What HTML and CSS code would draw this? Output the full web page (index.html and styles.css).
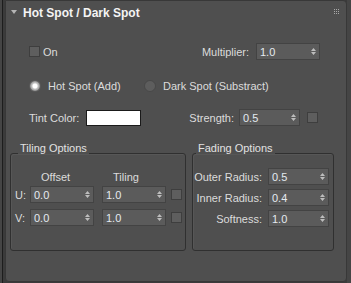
FILE: index.html
```html
<!DOCTYPE html>
<html lang="en">
<head>
  <meta charset="UTF-8" />
  <title>Hot Spot / Dark Spot</title>
  <link rel="stylesheet" href="styles.css">
</head>
<body>
  <div class="side">
    <div class="rollout">

      <!-- Rollout header -->
      <div class="roll-head">
        <span class="tri"></span>
        <span class="roll-title">Hot Spot / Dark Spot</span>
        <svg class="grip" width="5" height="5" viewBox="0 0 5 5">
          <rect x="0" y="0" width="1" height="1"/><rect x="2" y="0" width="1" height="1"/><rect x="4" y="0" width="1" height="1"/>
          <rect x="0" y="2" width="1" height="1"/><rect x="2" y="2" width="1" height="1"/><rect x="4" y="2" width="1" height="1"/>
          <rect x="0" y="4" width="1" height="1"/><rect x="2" y="4" width="1" height="1"/><rect x="4" y="4" width="1" height="1"/>
        </svg>
      </div>

      <div class="row row-on">
        <span class="check"></span>
        <span class="lbl on-lbl">On</span>
        <span class="fill"></span>
        <span class="lbl">Multiplier:</span>
        <div class="spin w64"><span>1.0</span><svg class="arr" width="5" height="9" viewBox="0 0 5 9"><path d="M0 4L2.5 1L5 4Z M0 5L2.5 8L5 5Z"/></svg></div>
      </div>

      <div class="row row-radio">
        <label class="radio-item first"><span class="radio on"></span>Hot Spot (Add)</label>
        <label class="radio-item"><span class="radio"></span>Dark Spot (Substract)</label>
      </div>

      <div class="row row-tint">
        <span class="lbl">Tint Color:</span>
        <span class="swatch"></span>
        <span class="fill"></span>
        <span class="lbl">Strength:</span>
        <div class="spin w61"><span>0.5</span><svg class="arr" width="5" height="9" viewBox="0 0 5 9"><path d="M0 4L2.5 1L5 4Z M0 5L2.5 8L5 5Z"/></svg></div>
        <span class="check small"></span>
      </div>

      <div class="groups">
        <div class="group tiling">
          <div class="group-title">Tiling Options</div>
          <div class="trow thead">
            <span class="axis"></span>
            <span class="col-head">Offset</span>
            <span class="col-head second">Tiling</span>
          </div>
          <div class="trow">
            <span class="axis">U:</span>
            <div class="spin w64"><span>0.0</span><svg class="arr" width="5" height="9" viewBox="0 0 5 9"><path d="M0 4L2.5 1L5 4Z M0 5L2.5 8L5 5Z"/></svg></div>
            <div class="spin w64 second"><span>1.0</span><svg class="arr" width="5" height="9" viewBox="0 0 5 9"><path d="M0 4L2.5 1L5 4Z M0 5L2.5 8L5 5Z"/></svg></div>
            <span class="check small"></span>
          </div>
          <div class="trow vrow">
            <span class="axis">V:</span>
            <div class="spin w64"><span>0.0</span><svg class="arr" width="5" height="9" viewBox="0 0 5 9"><path d="M0 4L2.5 1L5 4Z M0 5L2.5 8L5 5Z"/></svg></div>
            <div class="spin w64 second"><span>1.0</span><svg class="arr" width="5" height="9" viewBox="0 0 5 9"><path d="M0 4L2.5 1L5 4Z M0 5L2.5 8L5 5Z"/></svg></div>
            <span class="check small"></span>
          </div>
        </div>

        <div class="group fading">
          <div class="group-title">Fading Options</div>
          <div class="frow first">
            <span class="flbl">Outer Radius:</span>
            <div class="spin w61"><span>0.5</span><svg class="arr" width="5" height="9" viewBox="0 0 5 9"><path d="M0 4L2.5 1L5 4Z M0 5L2.5 8L5 5Z"/></svg></div>
          </div>
          <div class="frow">
            <span class="flbl">Inner Radius:</span>
            <div class="spin w61"><span>0.4</span><svg class="arr" width="5" height="9" viewBox="0 0 5 9"><path d="M0 4L2.5 1L5 4Z M0 5L2.5 8L5 5Z"/></svg></div>
          </div>
          <div class="frow">
            <span class="flbl">Softness:</span>
            <div class="spin w61"><span>1.0</span><svg class="arr" width="5" height="9" viewBox="0 0 5 9"><path d="M0 4L2.5 1L5 4Z M0 5L2.5 8L5 5Z"/></svg></div>
          </div>
        </div>
      </div>

    </div>
  </div>
</body>
</html>
```

FILE: styles.css
```css
html, body {
  margin: 0;
  height: 283px;
  overflow: hidden;
}

body {
  background: #454545;
  font-family: "Liberation Sans", Arial, sans-serif;
  font-size: 11px;
  line-height: 12px;
  color: #dcdcdc;
  padding-left: 2px;
}

.side {
  border-left: 1px solid #1d1d1d;
  background: #3b3b3b;
  padding-left: 2px;
  height: 283px;
  box-sizing: border-box;
  width: 345px;
}

.rollout {
  background: #4f4f4f;
  border: 1px solid #383838;
  border-radius: 0 4px 4px 4px;
  height: 282px;
  box-sizing: border-box;
  width: 342px;
}

/* header */
.roll-head {
  display: flex;
  align-items: center;
  padding: 5px 0 0 5px;
  height: 14px;
}

.tri {
  width: 0;
  height: 0;
  border-left: 3px solid transparent;
  border-right: 3px solid transparent;
  border-top: 4px solid #b5b5b5;
  margin-right: 6px;
  margin-top: -3px;
}

.roll-title {
  font-size: 12px;
  line-height: 14px;
  font-weight: bold;
  color: #f4f4f4;
}

.grip {
  fill: #a8a8a8;
  margin-left: auto;
  margin-right: 7px;
  align-self: flex-start;
  margin-top: 3px;
}

/* rows */
.row {
  display: flex;
  align-items: center;
  height: 17px;
}

.fill {
  flex: 1;
}

.row-on {
  margin-top: 23px;
  padding: 0 26px 0 23px;
}

.on-lbl {
  margin-left: 3px;
}

.row-on .spin {
  margin-left: 7px;
}

.row-radio {
  margin-top: 17px;
  padding-left: 23px;
}

.radio-item {
  display: flex;
  align-items: center;
}

.radio-item.first {
  width: 115px;
}

.radio {
  width: 12px;
  height: 12px;
  border-radius: 50%;
  box-sizing: border-box;
  background: #5d5d5d;
  border: 1px solid #484848;
  margin-right: 7px;
}

.radio.on {
  background: radial-gradient(circle, #ffffff 0 2px, #c9c9c9 3px, #8d8d8d 5px);
  border-color: #5a5a5a;
}

.row-tint {
  margin-top: 15px;
  padding: 0 28px 0 23px;
}

.swatch {
  width: 55px;
  height: 16px;
  box-sizing: border-box;
  background: #fff;
  border: 1px solid #1a1a1a;
  margin-left: 7px;
}

.row-tint .spin {
  margin-left: 5px;
  margin-right: 7px;
}

/* controls */
.check {
  width: 11px;
  height: 11px;
  box-sizing: border-box;
  background: #5e5e5e;
  border: 1px solid #3e3e3e;
  flex: none;
}

.spin {
  display: flex;
  align-items: center;
  justify-content: space-between;
  height: 17px;
  box-sizing: border-box;
  background: #5b5b5b;
  border: 1px solid #434343;
  padding: 0 3px 0 3px;
  color: #e4eaf0;
  flex: none;
}

.w64 { width: 64px; }
.w61 { width: 61px; }

.arr {
  fill: #bdbdbd;
}

/* group boxes */
.groups {
  display: flex;
  margin: 27px 0 0 4px;
  gap: 6px;
}

.group {
  border: 1px solid #303030;
  border-radius: 3px;
  box-shadow: inset 1px 1px 0 #575757;
  height: 98px;
  box-sizing: border-box;
}

.group-title {
  display: table;
  background: #4f4f4f;
  margin: -12px 0 0 3px;
  padding: 0 2px;
  color: #e2e2e2;
}

.tiling {
  width: 176px;
  padding-left: 4px;
}

.fading {
  width: 142px;
}

.trow {
  display: flex;
  align-items: center;
  height: 17px;
  margin-top: 3px;
}

.trow.thead {
  margin-top: 17px;
  height: 12px;
}

.trow.vrow {
  margin-top: 6px;
}

.axis {
  width: 15px;
  flex: none;
}

.col-head {
  width: 64px;
  padding-left: 11px;
  box-sizing: border-box;
}

.trow .second {
  margin-left: 8px;
}

.trow .check {
  margin-left: 5px;
}

.frow {
  display: flex;
  align-items: center;
  height: 17px;
  margin-top: 4px;
}

.frow.first {
  margin-top: 14px;
}

.flbl {
  width: 69px;
  text-align: right;
  margin-right: 6px;
}
```
